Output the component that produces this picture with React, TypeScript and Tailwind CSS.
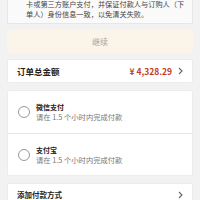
import React from "react"

const font = { fontFamily: '"Noto Sans CJK SC", "Noto Sans", sans-serif' }

function Chevron() {
  return (
    <svg width="5" height="8" viewBox="0 0 5 8" className="shrink-0">
      <path d="M1 1l3 3-3 3" fill="none" stroke="#666" strokeWidth="1.1" />
    </svg>
  )
}

const options = [
  { title: "微信支付", note: "请在 1.5 个小时内完成付款" },
  { title: "支付宝", note: "请在 1.5 个小时内完成付款" },
]

export default function App() {
  return (
    <div className="w-[200px] h-[200px] overflow-hidden bg-[#f2f2f2] px-[7px] text-[#333]" style={font}>
      {/* notice */}
      <div className="-mt-px rounded-b-[2px] border border-t-0 border-[#e6e6e6] bg-[#fafafa] pl-[18px] pr-1 pb-[4px] text-[7.2px] leading-[10px] text-[#444]">
        <p className="whitespace-nowrap">卡或第三方账户支付，并保证付款人与订购人（下</p>
        <p>单人）身份信息一致，以免清关失败。</p>
      </div>

      <button className="mt-[6px] flex h-[23px] w-full items-center justify-center rounded-[2px] bg-[#fbf4e8] text-[8px] text-[#a8a29a]">
        继续
      </button>

      {/* total */}
      <div className="mt-[6px] flex h-[24px] items-center rounded-[2px] border border-[#ececec] bg-white pl-[9px] pr-[9px]">
        <span className="text-[8.5px] font-bold text-[#222]">订单总金额</span>
        <span className="ml-auto mr-[6px] text-[8.5px] font-bold text-[#c23b22]">¥ 4,328.29</span>
        <Chevron />
      </div>

      {/* methods */}
      <div className="mt-[7px] rounded-[2px] border border-[#ececec] bg-white">
        {options.map((o, i) => (
          <div
            key={o.title}
            className={`flex h-[42px] items-center pl-[10px] ${i > 0 ? "border-t border-[#e6e6e6]" : ""}`}
          >
            <span className="h-[12px] w-[12px] shrink-0 rounded-full border border-[#999]" />
            <div className="ml-[6px] pt-[1px]">
              <p className="text-[7px] font-bold leading-[9px] text-[#222]">{o.title}</p>
              <p className="text-[7.3px] leading-[10px] text-[#777]">{o.note}</p>
            </div>
          </div>
        ))}
      </div>

      <div className="mt-[7px] flex h-[24px] items-center rounded-[2px] border border-[#ececec] bg-white pl-[9px] pr-[9px]">
        <span className="text-[7.5px] font-bold text-[#222]">添加付款方式</span>
        <span className="ml-auto" />
        <Chevron />
      </div>
    </div>
  )
}
